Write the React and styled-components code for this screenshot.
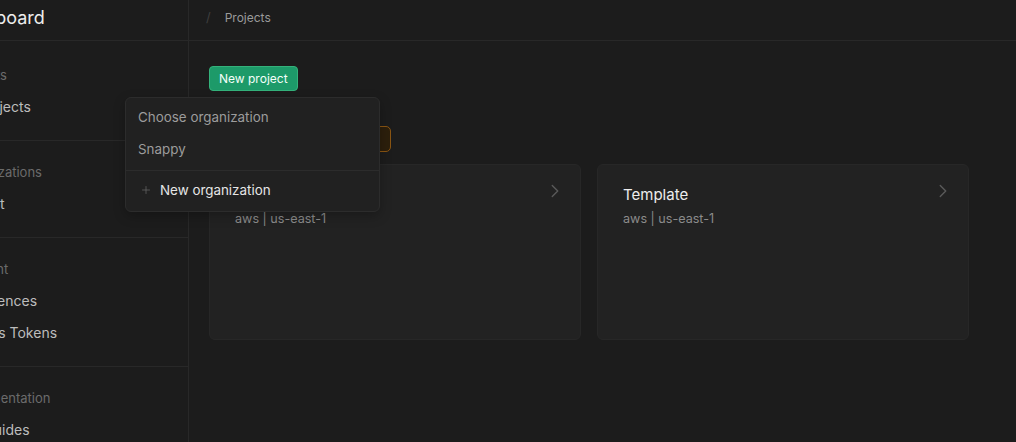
import React from 'react';
import styled, { createGlobalStyle } from 'styled-components';
import { ChevronRight, Plus } from 'lucide-react';

const GlobalStyle = createGlobalStyle`
  * {
    box-sizing: border-box;
  }
  html, body {
    margin: 0;
    padding: 0;
    background-color: #1c1c1c;
    font-family: Inter, 'Noto Sans', sans-serif;
    -webkit-font-smoothing: antialiased;
  }
`;

const StyledShell = styled.div`
  display: flex;
  width: 1016px;
  height: 442px;
  overflow: hidden;
  background-color: #1c1c1c;
  position: relative;
`;

const StyledSidebar = styled.aside`
  flex: 0 0 189px;
  border-right: 1px solid #282828;
  overflow: hidden;
  white-space: nowrap;
`;

const StyledSidebarInner = styled.div`
  margin-left: -43px;
`;

const StyledSidebarHeader = styled.div`
  height: 41px;
  display: flex;
  align-items: center;
  border-bottom: 1px solid #282828;
  padding-bottom: 6px;
  margin-left: -5px;
  font-size: 18px;
  color: #ededed;
`;

const StyledNav = styled.nav`
  padding-top: 4px;
`;

const StyledSection = styled.ul`
  list-style: none;
  margin: 0;
  padding: 21px 0 23px;
  display: flex;
  flex-direction: column;
  gap: 12px;
  border-bottom: 1px solid #282828;

  &:first-child {
    padding-top: 20px;
  }

  &:last-child {
    border-bottom: 0;
  }
`;

const StyledSectionLabel = styled.li`
  height: 20px;
  line-height: 20px;
  font-size: 13px;
  color: #6b6b6b;
`;

const StyledSectionItem = styled.li`
  height: 20px;
  line-height: 20px;
  font-size: 14px;
  color: #bcbcbc;
`;

const StyledMain = styled.main`
  flex: 1;
  min-width: 0;
`;

const StyledTopBar = styled.div`
  height: 41px;
  display: flex;
  align-items: center;
  gap: 14px;
  padding: 0 0 6px 17px;
  border-bottom: 1px solid #282828;
  font-size: 12px;
  color: #9a9a9a;
`;

const StyledSlash = styled.span`
  color: #3e3e3e;
  font-size: 13px;
`;

const StyledContent = styled.div`
  padding: 25px 20px 0;
`;

const StyledActions = styled.div`
  position: relative;
  display: flex;
`;

const StyledButton = styled.button`
  height: 25px;
  padding: 0 9px;
  border-radius: 4px;
  border: 1px solid #34b27b;
  background-color: #1d9a69;
  color: #f4fff9;
  font-family: inherit;
  font-size: 12px;
  cursor: pointer;
`;

const StyledNotice = styled.div`
  margin-top: 35px;
  width: 182px;
  height: 26px;
  border-radius: 5px;
  border: 1px solid #8a5513;
  background-color: #2c1f0c;
`;

const StyledGrid = styled.div`
  margin-top: 12px;
  display: grid;
  grid-template-columns: repeat(2, 372px);
  gap: 16px;
`;

const StyledCard = styled.div`
  height: 176px;
  padding: 19px 14px 0 25px;
  border-radius: 6px;
  border: 1px solid #272727;
  background-color: #222222;
`;

const StyledCardHead = styled.div`
  display: flex;
  justify-content: space-between;
  align-items: center;
  height: 20px;
`;

const StyledCardTitle = styled.h3`
  margin: 0;
  font-size: 15px;
  font-weight: 400;
  color: #ededed;
`;

const StyledCardMeta = styled.p`
  margin: 5px 0 0;
  font-size: 12.6px;
  line-height: 20px;
  color: #8b8b8b;
`;

const StyledChevron = styled(ChevronRight)`
  color: #5a5a5a;
  margin-top: -6px;
`;

const StyledMenu = styled.div`
  position: absolute;
  top: 31px;
  left: -84px;
  width: 255px;
  z-index: 10;
  border-radius: 6px;
  border: 1px solid #2c2c2c;
  background-color: #212121;
  box-shadow: 0 4px 12px rgba(0, 0, 0, 0.25);
  white-space: nowrap;
`;

const StyledMenuGroup = styled.div`
  padding: 3px 0 5px;
  & + & {
    border-top: 1px solid #2c2c2c;
  }
`;

const StyledMenuItem = styled.div`
  height: 32px;
  display: flex;
  align-items: center;
  gap: 8px;
  padding: 0 12px;
  font-size: 13.4px;
  color: ${({ strong }) => (strong ? '#e6e6e6' : '#9c9c9c')};

  svg {
    color: #666666;
    margin-left: 2px;
  }
`;

const sections = [
  { label: 'Projects', items: ['All projects'] },
  { label: 'Organizations', items: ['Default'] },
  { label: 'Account', items: ['Preferences', 'Access Tokens'] },
  { label: 'Documentation', items: ['API Guides', 'API Reference'] },
];

const projects = [
  { name: 'Snappy', meta: 'aws | us-east-1' },
  { name: 'Template', meta: 'aws | us-east-1' },
];

const ProjectCard = ({ name, meta }) => (
  <StyledCard>
    <StyledCardHead>
      <StyledCardTitle>{name}</StyledCardTitle>
      <StyledChevron size={22} strokeWidth={1.5} />
    </StyledCardHead>
    <StyledCardMeta>{meta}</StyledCardMeta>
  </StyledCard>
);

const App = () => {
  return (
    <>
      <GlobalStyle />
      <StyledShell>
        <StyledSidebar>
          <StyledSidebarInner>
            <StyledSidebarHeader>Dashboard</StyledSidebarHeader>
            <StyledNav>
              {sections.map((section) => (
                <StyledSection key={section.label}>
                  <StyledSectionLabel>{section.label}</StyledSectionLabel>
                  {section.items.map((item) => (
                    <StyledSectionItem key={item}>{item}</StyledSectionItem>
                  ))}
                </StyledSection>
              ))}
            </StyledNav>
          </StyledSidebarInner>
        </StyledSidebar>
        <StyledMain>
          <StyledTopBar>
            <StyledSlash>/</StyledSlash>
            <span>Projects</span>
          </StyledTopBar>
          <StyledContent>
            <StyledActions>
              <StyledButton>New project</StyledButton>
              <StyledMenu>
                <StyledMenuGroup>
                  <StyledMenuItem>Choose organization</StyledMenuItem>
                  <StyledMenuItem>Snappy</StyledMenuItem>
                </StyledMenuGroup>
                <StyledMenuGroup>
                  <StyledMenuItem strong>
                    <Plus size={12} strokeWidth={1.5} />
                    New organization
                  </StyledMenuItem>
                </StyledMenuGroup>
              </StyledMenu>
            </StyledActions>
            <StyledNotice />
            <StyledGrid>
              {projects.map((project) => (
                <ProjectCard key={project.name} {...project} />
              ))}
            </StyledGrid>
          </StyledContent>
        </StyledMain>
      </StyledShell>
    </>
  );
};

export default App;
